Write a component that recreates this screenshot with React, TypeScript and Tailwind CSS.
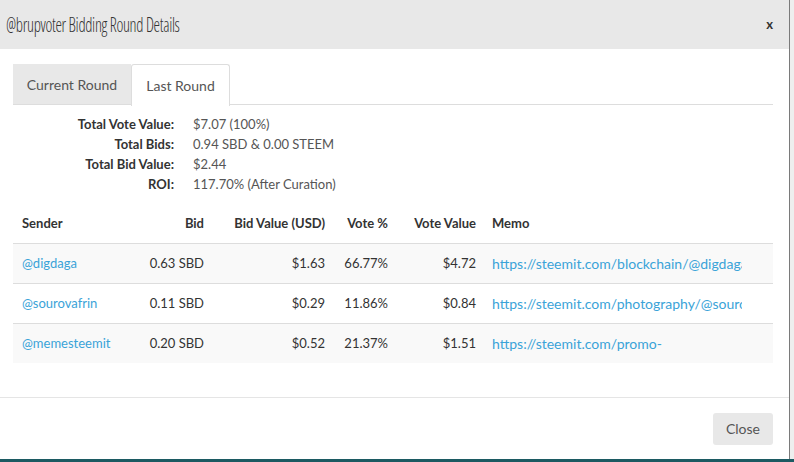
import React from "react";

const rows = [
  { sender: "@digdaga", bid: "0.63 SBD", usd: "$1.63", pct: "66.77%", val: "$4.72", memo: "https://steemit.com/blockchain/@digdaga/some-post" },
  { sender: "@sourovafrin", bid: "0.11 SBD", usd: "$0.29", pct: "11.86%", val: "$0.84", memo: "https://steemit.com/photography/@sourovafrin/post" },
  { sender: "@memesteemit", bid: "0.20 SBD", usd: "$0.52", pct: "21.37%", val: "$1.51", memo: "https://steemit.com/promo-" },
];

const info = [
  ["Total Vote Value:", "$7.07 (100%)"],
  ["Total Bids:", "0.94 SBD & 0.00 STEEM"],
  ["Total Bid Value:", "$2.44"],
  ["ROI:", "117.70% (After Curation)"],
];

export default function App() {
  return (
    <div className="w-[794px] h-[462px] bg-[#eeeeee] overflow-hidden flex flex-col" style={{ fontFamily: "Lato, 'Open Sans', sans-serif" }}>
      <div className="flex flex-1 min-h-0">
        <div className="w-[790px] h-[459px] bg-white border-r border-[#7a7a7a] flex flex-col text-[13px] text-[#333]">
          <div className="h-[49px] bg-[#e8e8e8] flex items-center justify-between pl-[6px] pr-[16px]">
            <div className="text-[21px] text-[#333] font-stretch-[75%] font-light tracking-[-0.4px] whitespace-nowrap origin-left scale-x-[0.78]" style={{ fontFamily: "'Open Sans', sans-serif" }}>
              @brupvoter Bidding Round Details
            </div>
            <div className="text-[13px] font-bold text-[#333] leading-none">x</div>
          </div>
          <div className="flex-1 px-[13px] pt-[15px]">
            <div className="flex w-[760px] border-b border-[#dddddd] h-[41px]">
              <div className="w-[118px] h-[41px] bg-[#e8e8e8] flex items-center justify-center text-[#555] text-[14px] border-b border-[#dddddd]">Current Round</div>
              <div className="w-[99px] h-[42px] bg-white border border-[#dddddd] border-b-0 rounded-t-[3px] flex items-center justify-center text-[#555] text-[14px] -mb-px">Last Round</div>
            </div>
            <div className="mt-[10px] flex flex-col">
              {info.map(([k, v]) => (
                <div key={k} className="flex h-[20px] items-center">
                  <div className="w-[161px] text-right font-bold text-[#333]">{k}</div>
                  <div className="pl-[19px] text-[#555]">{v}</div>
                </div>
              ))}
            </div>
            <div className="mt-[9px] w-[760px] text-[#333]">
              <div className="grid grid-cols-[120px_71px_121px_63px_88px_minmax(0,1fr)] h-[39px] items-center font-bold">
                <div className="pl-[9px]">Sender</div>
                <div className="text-right">Bid</div>
                <div className="text-right">Bid Value (USD)</div>
                <div className="text-right">Vote %</div>
                <div className="text-right">Vote Value</div>
                <div className="pl-[16px]">Memo</div>
              </div>
              {rows.map((r, i) => (
                <div key={r.sender} className={`grid grid-cols-[120px_71px_121px_63px_88px_minmax(0,1fr)] h-[40px] items-center border-t border-[#dddddd] ${i % 2 === 0 ? "bg-[#f9f9f9]" : "bg-white"}`}>
                  <div className="pl-[9px] text-[#3aa3d8]">{r.sender}</div>
                  <div className="text-right text-[#333]">{r.bid}</div>
                  <div className="text-right text-[#333]">{r.usd}</div>
                  <div className="text-right text-[#333]">{r.pct}</div>
                  <div className="text-right text-[#333]">{r.val}</div>
                  <div className="min-w-0 pr-[31px]">
                    <div className="pl-[16px] text-[14px] text-[#3aa3d8] overflow-hidden whitespace-nowrap">{r.memo}</div>
                  </div>
                </div>
              ))}
            </div>
          </div>
          <div className="h-[62px] border-t border-[#e5e5e5] flex items-center justify-end pr-[16px]">
            <div className="w-[60px] h-[32px] bg-[#e8e8e8] rounded-[3px] flex items-center justify-center text-[14px] text-[#555]">Close</div>
          </div>
        </div>
      </div>
      <div className="h-[3px] bg-[#1c5a62]"></div>
    </div>
  );
}
